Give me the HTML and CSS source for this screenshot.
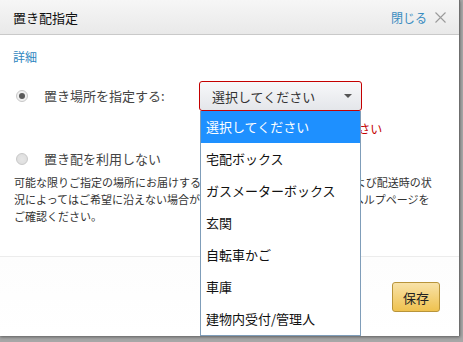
FILE: index.html
```html
<!DOCTYPE html>
<html lang="ja">
<head>
<meta charset="utf-8">
<link rel="stylesheet" href="styles.css">
</head>
<body>
<div class="dialog">
  <div class="header">
    <span class="title">置き配指定</span>
    <a class="close">閉じる<svg class="x" width="11" height="11" viewBox="0 0 11 11"><path d="M0.5 0.5L10.5 10.5M10.5 0.5L0.5 10.5" stroke="#9a9a9a" stroke-width="1.1" fill="none"/></svg></a>
  </div>
  <div class="content">
    <a class="details">詳細</a>
    <div class="options">
      <label class="opt">
        <span class="radio checked"></span>
        <span>置き場所を指定する:</span>
      </label>
      <div class="select-wrap">
        <div class="select">
          <span>選択してください</span>
          <span class="arrow"></span>
        </div>
        <ul class="listbox">
          <li class="active">選択してください</li>
          <li>宅配ボックス</li>
          <li>ガスメーターボックス</li>
          <li>玄関</li>
          <li>自転車かご</li>
          <li>車庫</li>
          <li>建物内受付/管理人</li>
        </ul>
      </div>
      <div></div>
      <div class="error">置き配の場所を選択してください</div>
      <label class="opt opt2">
        <span class="radio"></span>
        <span>置き配を利用しない</span>
      </label>
    </div>
    <p class="note">可能な限りご指定の場所にお届けするよう努めますが、天候、交通および配送時の状況によってはご希望に沿えない場合があります。詳しくは、こちらのヘルプページをご確認ください。</p>
  </div>
  <div class="footer">
    <button class="save">保存</button>
  </div>
</div>
</body>
</html>
```

FILE: styles.css
```css
* { box-sizing: border-box; }
html, body { margin: 0; padding: 0; }
body {
  background: #a7a7a7;
  font-family: "Noto Sans CJK JP", "Noto Sans", sans-serif;
  color: #333;
  width: 463px;
  height: 342px;
  overflow: hidden;
}
.dialog {
  width: 460px;
  background: #fff;
  border-right: 1px solid #6f6f6f;
  box-shadow: 0 1px 3px rgba(0,0,0,0.45);
  position: relative;
}
.header {
  height: 35px;
  background: linear-gradient(#f6f6f6, #e9e9e9);
  border-bottom: 1px solid #c9c9c9;
  display: flex;
  align-items: center;
  justify-content: space-between;
  padding: 0 13px 0 13px;
}
.title { font-size: 13px; color: #111; }
.close {
  font-size: 12px;
  color: #3a8cc0;
  display: flex;
  align-items: center;
  gap: 8px;
}
.x { display: block; }
.content { padding: 14px 13px 0 13px; }
.details {
  display: block;
  font-size: 12px;
  line-height: 16px;
  color: #2f86c0;
}
.options {
  margin-top: 16px;
  display: grid;
  grid-template-columns: 186px 163px;
  align-items: center;
}
.opt {
  display: flex;
  align-items: center;
  font-size: 13px;
  line-height: 18px;
  color: #444;
}
.radio {
  width: 12px;
  height: 12px;
  border-radius: 50%;
  border: 1px solid #c8c8c8;
  background: radial-gradient(circle, #e6e6e6 0, #dcdcdc 100%);
  margin-left: 3px;
  margin-right: 16px;
  flex: none;
  position: relative;
}
.radio.checked {
  background: #f0f0f0;
}
.radio.checked::after {
  content: "";
  position: absolute;
  left: 2px; top: 2px;
  width: 6px; height: 6px;
  border-radius: 50%;
  background: #5a5a5a;
}
.select-wrap { position: relative; }
.select {
  height: 30px;
  border: 1px solid #c40000;
  border-radius: 3px;
  background: linear-gradient(#f7f8fa, #e4e6ea);
  display: flex;
  align-items: center;
  justify-content: space-between;
  padding: 0 9px 0 12px;
  font-size: 13px;
  color: #333;
}
.arrow {
  width: 0; height: 0;
  border-left: 4px solid transparent;
  border-right: 4px solid transparent;
  border-top: 4px solid #555;
}
.listbox {
  position: absolute;
  left: 1px;
  top: 30px;
  width: 161px;
  margin: 0;
  padding: 0;
  list-style: none;
  background: #fff;
  border: 1px solid #7f9db9;
  border-top: none;
  z-index: 5;
}
.listbox li {
  height: 32px;
  line-height: 32px;
  padding-left: 5px;
  font-size: 13px;
  color: #111;
  white-space: nowrap;
}
.listbox li.active { background: #1e90ff; color: #fff; }
.error {
  margin-top: 10px;
  padding-left: 4px;
  font-size: 12px;
  line-height: 16px;
  color: #c40000;
  white-space: nowrap;
}
.opt2 { margin-top: 13px; grid-column: 1; }
.note {
  margin: 6px 0 0 1px;
  width: 420px;
  font-size: 11px;
  line-height: 17px;
  color: #333;
}
.footer {
  margin-top: 31px;
  border-top: 1px solid #ececec;
  background: linear-gradient(#fdfdfd, #fff);
  padding: 25px 19px 24px 0;
  display: flex;
  justify-content: flex-end;
}
.save {
  width: 48px;
  height: 30px;
  border: 1px solid #b8943a;
  border-radius: 3px;
  background: linear-gradient(#f8e2a8, #efc24f);
  font-family: "Noto Sans CJK JP", sans-serif;
  font-size: 13px;
  color: #222;
  padding: 0;
}
```
